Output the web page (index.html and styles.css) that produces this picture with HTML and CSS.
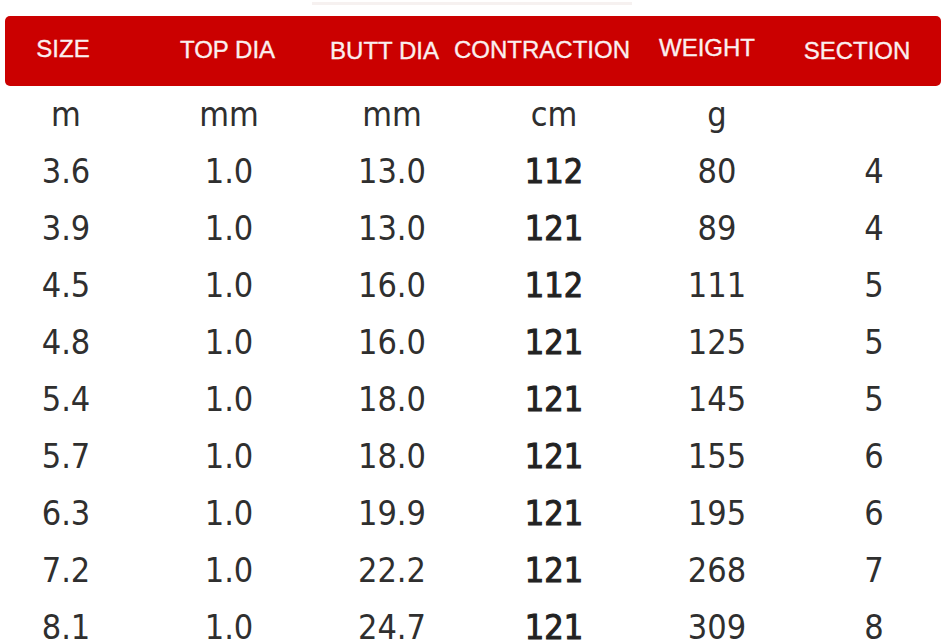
FILE: index.html
```html
<!DOCTYPE html>
<html>
<head>
<meta charset="utf-8">
<link rel="stylesheet" href="styles.css">
</head>
<body>
<div class="page">
  <div class="topline"></div>
  <div class="bar">
    <div class="h c1">SIZE</div>
    <div class="h c2">TOP DIA</div>
    <div class="h c3">BUTT DIA</div>
    <div class="h c4">CONTRACTION</div>
    <div class="h c5">WEIGHT</div>
    <div class="h c6">SECTION</div>
  </div>
  <div class="table">
    <div class="row"><div>m</div><div>mm</div><div>mm</div><div>cm</div><div>g</div><div></div></div>
    <div class="row"><div>3.6</div><div>1.0</div><div>13.0</div><div class="b">112</div><div>80</div><div>4</div></div>
    <div class="row"><div>3.9</div><div>1.0</div><div>13.0</div><div class="b">121</div><div>89</div><div>4</div></div>
    <div class="row"><div>4.5</div><div>1.0</div><div>16.0</div><div class="b">112</div><div>111</div><div>5</div></div>
    <div class="row"><div>4.8</div><div>1.0</div><div>16.0</div><div class="b">121</div><div>125</div><div>5</div></div>
    <div class="row"><div>5.4</div><div>1.0</div><div>18.0</div><div class="b">121</div><div>145</div><div>5</div></div>
    <div class="row"><div>5.7</div><div>1.0</div><div>18.0</div><div class="b">121</div><div>155</div><div>6</div></div>
    <div class="row"><div>6.3</div><div>1.0</div><div>19.9</div><div class="b">121</div><div>195</div><div>6</div></div>
    <div class="row"><div>7.2</div><div>1.0</div><div>22.2</div><div class="b">121</div><div>268</div><div>7</div></div>
    <div class="row"><div>8.1</div><div>1.0</div><div>24.7</div><div class="b">121</div><div>309</div><div>8</div></div>
  </div>
</div>
</body>
</html>
```
FILE: styles.css
```css
html, body {
  margin: 0;
  padding: 0;
  background: #ffffff;
  overflow: hidden;
}
.page {
  width: 950px;
  height: 642px;
  padding-top: 2px;
  box-sizing: border-box;
}
.topline {
  margin-left: 312px;
  width: 320px;
  height: 3px;
  background: #f6f1f0;
}
.bar {
  margin: 11px 0 0 5px;
  width: 936px;
  height: 70px;
  background: #cb0000;
  border-radius: 5px;
  display: grid;
  grid-template-columns: 116px 213px 101px 214px 116px 184px;
  align-items: center;
  font-family: "Liberation Sans", Arial, sans-serif;
  font-size: 24px;
  color: #fbefef;
  -webkit-text-stroke: 0.35px #fbefef;
}
.h {
  display: flex;
  justify-content: center;
  white-space: nowrap;
}
.c1 { margin-top: -4px; }
.c2 { margin-top: -2px; }
.c3 { margin-top: 0px; }
.c4 { margin-top: -2px; }
.c5 { margin-top: -6px; }
.c6 { margin-top: 0px; }
.table {
  font-family: "DejaVu Sans Condensed", "DejaVu Sans", sans-serif;
  font-stretch: condensed;
  font-size: 34px;
  color: #2f2f2f;
}
.row {
  display: grid;
  grid-template-columns: 132px 194px 132px 192px 134px 180px;
  height: 57px;
  line-height: 57px;
}
.row > div {
  display: flex;
  justify-content: center;
  white-space: nowrap;
}
.row .b {
  color: #222;
  -webkit-text-stroke: 1px #222;
}
```
